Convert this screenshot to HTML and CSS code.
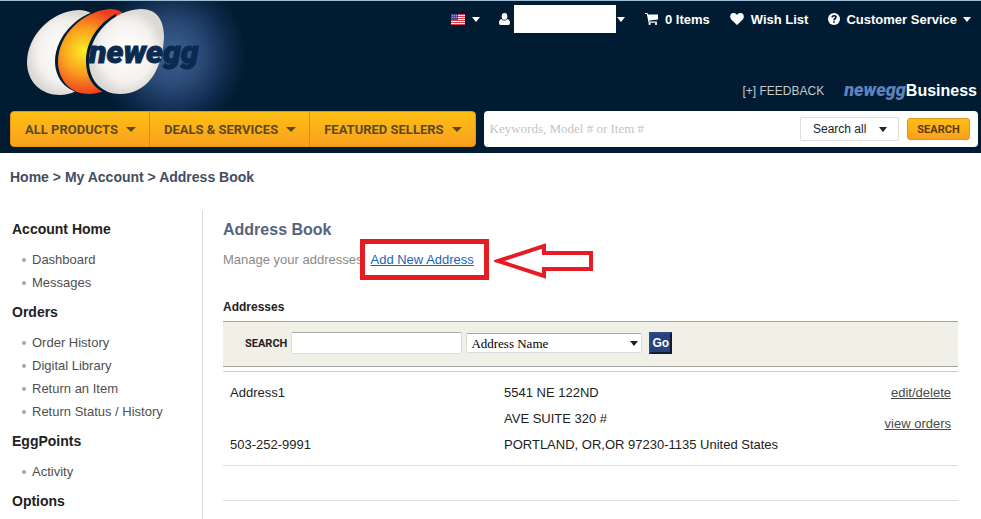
FILE: index.html
```html
<!DOCTYPE html>
<html lang="en">
<head>
  <meta charset="UTF-8" />
  <meta name="viewport" content="width=device-width, initial-scale=1" />
  <title>Address Book - Newegg.com</title>
  <link rel="stylesheet" href="styles.css">
</head>
<body>
  <header>
    <div class="masthead">
      <a class="logo" href="#" aria-label="newegg">
        <svg width="232" height="109" viewBox="0 1 232 109">
          <defs>
            <radialGradient id="shell">
              <stop offset="0" stop-color="#ffffff" />
              <stop offset="0.7" stop-color="#f4f2f0" />
              <stop offset="1" stop-color="#dcd8d3" />
            </radialGradient>
            <radialGradient id="yolk" gradientUnits="userSpaceOnUse" cx="84" cy="51" r="44">
              <stop offset="0" stop-color="#fbee22" />
              <stop offset="0.5" stop-color="#f9a11e" />
              <stop offset="1" stop-color="#ee3c20" />
            </radialGradient>
          </defs>
          <path d="M79 10C50 11 27 37 27 62C27 82 41 95 60 95C82 95 98 74 101 46C103 24 96 10 79 10Z" fill="url(#shell)" />
          <path d="M108 9C80 10 55 36 55 61C55 81 69 94 89 94C112 94 130 74 133 46C134 24 127 9 108 9Z" fill="#011c32" />
          <path d="M110 9C82 11 58 36 58 61C58 81 71 94 89 94C112 94 130 74 133 46C134 24 127 9 110 9Z" fill="url(#yolk)" />
          <path d="M122 11C100 20 86 40 86 61C86 77 93 87 103 92L116 88V14Z" fill="#011c32" />
          <path d="M141 9C112 10 89 36 89 61C89 81 102 94 120 94C146 94 162 72 164 38C164 20 157 9 141 9Z" fill="url(#shell)" />
          <text class="logo-text" x="89" y="63">newegg</text>
        </svg>
      </a>
      <div class="masthead-links">
        <nav class="top-links">
          <button class="country" type="button" aria-label="Country">
            <svg width="14" height="11" viewBox="0 0 14 11">
              <rect width="14" height="11" fill="#f6e6e8" />
              <path d="M0 .5h14M0 2.5h14M0 4.5h14M0 6.5h14M0 8.5h14M0 10.5h14" stroke="#d0404e" />
              <rect width="7" height="6" fill="#454a98" />
              <path d="M1 1.5h6M1 3.5h6" stroke="#9fa3cf" stroke-dasharray="1 1" />
            </svg>
            <span class="caret"></span>
          </button>
          <div class="account">
            <svg width="11" height="12" viewBox="0 0 11 12" fill="#fff">
              <ellipse cx="5.5" cy="3.4" rx="2.8" ry="3.4" />
              <path d="M2.600 6C.7 6.400 0 8 0 10q0 2 1.600 2h7.800Q11 12 11 10C11 8 10.300 6.400 8.400 6C6.800 8 4.200 8 2.600 6Z" />
            </svg>
            <span class="account-name"></span>
            <span class="caret"></span>
          </div>
          <a class="cart" href="#">
            <svg width="13" height="12" viewBox="0 0 13 12" fill="#fff">
              <path d="M0 0h2.500l.5 1.500h10v5l-8.600 1.100.2 1h7.400v1.100H3.600L1.800 1.100H0Z" />
              <circle cx="4.600" cy="10.900" r="1.100" />
              <circle cx="11" cy="10.900" r="1.100" />
            </svg>
            0 Items
          </a>
          <a class="wish" href="#">
            <svg width="14" height="12" viewBox="0 0 14 12" fill="#fff">
              <path d="M7 12L1.200 6.400C-.6 4.500-.2 0 3.700 0C5.300 0 6.300.9 7 1.900C7.700.9 8.700 0 10.300 0C14.200 0 14.600 4.500 12.800 6.400Z" />
            </svg>
            Wish List
          </a>
          <a class="service" href="#">
            <svg width="12" height="12" viewBox="0 0 12 12">
              <circle cx="6" cy="6" r="6" fill="#fff" />
              <path d="M4 4.300C4.300 2.200 8 2.200 8 4.300C8 5.700 6 5.700 6 7.200M6 8.200v1.600" fill="none" stroke="#011c32" stroke-width="1.700" />
            </svg>
            Customer Service
            <span class="caret"></span>
          </a>
        </nav>
        <div class="sub-links">
          <a class="feedback" href="#">[+] FEEDBACK</a>
          <a class="business" href="#"><em>newegg</em>Business</a>
        </div>
      </div>
    </div>
    <div class="nav-row">
      <nav class="main-nav">
        <button type="button">ALL PRODUCTS <span class="caret"></span></button>
        <button type="button">DEALS &amp; SERVICES <span class="caret"></span></button>
        <button type="button">FEATURED SELLERS <span class="caret"></span></button>
      </nav>
      <form class="site-search">
        <input type="text" placeholder="Keywords, Model # or Item #" aria-label="Search products">
        <div class="select-box scope">
          <select aria-label="Search in">
            <option>Search all</option>
          </select>
          <span class="caret"></span>
        </div>
        <button type="button">SEARCH</button>
      </form>
    </div>
  </header>

  <div class="breadcrumb">
    <a href="#">Home</a> &gt; <a href="#">My Account</a> &gt; <a href="#">Address Book</a>
  </div>

  <div class="main-container">
    <!-- LEFT: account menu -->
    <aside class="sidebar">
      <h2>Account Home</h2>
      <ul>
        <li><a href="#">Dashboard</a></li>
        <li><a href="#">Messages</a></li>
      </ul>
      <h2>Orders</h2>
      <ul>
        <li><a href="#">Order History</a></li>
        <li><a href="#">Digital Library</a></li>
        <li><a href="#">Return an Item</a></li>
        <li><a href="#">Return Status / History</a></li>
      </ul>
      <h2>EggPoints</h2>
      <ul>
        <li><a href="#">Activity</a></li>
      </ul>
      <h2>Options</h2>
    </aside>

    <!-- RIGHT: address book -->
    <main class="content">
      <h1>Address Book</h1>
      <p class="intro">
        Manage your addresses
        <span class="callout">
          <a href="#">Add New Address</a>
          <svg class="callout-arrow" width="100" height="38" viewBox="0 0 100 38">
            <path d="M4 19L50 4V11H97V27H50V34Z" fill="#fff" stroke="#e51c23" stroke-width="4" />
          </svg>
        </span>
      </p>
      <h3>Addresses</h3>
      <form class="address-search">
        <label for="addressSearch">SEARCH</label>
        <input type="text" id="addressSearch">
        <div class="select-box field">
          <select aria-label="Search field">
            <option>Address Name</option>
          </select>
          <span class="caret"></span>
        </div>
        <button type="button">Go</button>
      </form>
      <table>
        <tbody>
          <tr>
            <td class="name">
              <div>Address1</div>
              <div class="phone">503-252-9991</div>
            </td>
            <td class="street">
              <div>5541 NE 122ND</div>
              <div>AVE SUITE 320 #</div>
              <div>PORTLAND, OR,OR 97230-1135 United States</div>
            </td>
            <td class="actions">
              <a href="#">edit/delete</a>
              <a href="#">view orders</a>
            </td>
          </tr>
          <tr class="spacer">
            <td colspan="3"></td>
          </tr>
        </tbody>
      </table>
    </main>
  </div>
</body>
</html>
```

FILE: styles.css
```css
* {
  box-sizing: border-box;
}
body {
  margin: 0;
  font-family: "Liberation Sans", Arial, sans-serif;
  font-size: 13px;
  color: #222;
  background-color: #fff;
}
a {
  color: inherit;
  text-decoration: none;
}
button {
  cursor: pointer;
}
svg {
  display: block;
  flex-shrink: 0;
}
.caret {
  border: 4px solid transparent;
  border-top: 5px solid currentColor;
  border-bottom: 0;
}

/* header */
header {
  background: radial-gradient(74px 78px at 172px 54px, #3d6292, #2a4a77 40%, #0f2b4d 75%, transparent) #011c32;
  border-top: 1px solid #9dbdd2;
  padding-bottom: 6px;
}
.masthead {
  display: flex;
  justify-content: space-between;
  height: 110px;
}
.logo-text {
  font: italic 900 32px Roboto, Arial, sans-serif;
  fill: #0b2a50;
  stroke: #0b2a50;
  stroke-width: 1px;
}
.masthead-links {
  display: flex;
  flex-direction: column;
  justify-content: space-between;
  color: #fff;
  padding: 3px 4px 12px 0;
}
.top-links {
  display: flex;
  align-items: center;
  justify-content: flex-end;
  height: 30px;
  padding-right: 6px;
  font-weight: bold;
}
.top-links a,
.account,
.country {
  display: flex;
  align-items: center;
  gap: 7px;
}
.country {
  padding: 0;
  border: 0;
  background: none;
  color: #fff;
  margin-right: 19px;
}
.account {
  gap: 4px;
}
.account-name {
  width: 102px;
  height: 28px;
  background-color: #fff;
  margin-right: -3px;
}
.top-links .cart,
.top-links .wish,
.top-links .service {
  margin-left: 20px;
}
.top-links .service {
  gap: 6px;
}
.sub-links {
  display: flex;
  align-items: center;
  justify-content: flex-end;
  gap: 20px;
  line-height: 16px;
}
.feedback {
  font-size: 12px;
  color: #c3c8ce;
}
.business {
  font-size: 16px;
  font-weight: bold;
}
.business em {
  font: italic 900 18px/16px Roboto, Arial, sans-serif;
  color: #5f83bd;
}

/* navigation bar */
.nav-row {
  display: flex;
  gap: 8px;
  padding: 0 3px 0 10px;
}
.main-nav {
  display: flex;
  height: 36px;
  border: 1px solid #e8951a;
  border-radius: 4px;
  background: linear-gradient(#fdbf14, #f9a01e);
}
.main-nav button {
  display: flex;
  align-items: center;
  gap: 8px;
  padding: 0 13px 0 14px;
  border: 0;
  border-right: 1px solid #d98a1c;
  background: none;
  color: #5c4a1e;
  font: bold 13px Roboto, Arial, sans-serif;
  white-space: nowrap;
}
.main-nav button:last-child {
  border-right: 0;
}
.main-nav .caret {
  border-left-width: 5px;
  border-right-width: 5px;
}
.site-search {
  display: flex;
  align-items: center;
  flex: 1;
  gap: 8px;
  height: 36px;
  padding: 0 8px 0 6px;
  border-radius: 4px;
  background-color: #fff;
}
.site-search input {
  flex: 1;
  min-width: 0;
  padding: 0;
  border: 0;
  font: 13px "Liberation Serif", "Times New Roman", serif;
}
.site-search input::placeholder {
  color: #c4c4c4;
}
.select-box {
  position: relative;
}
.select-box select {
  appearance: none;
  width: 100%;
  height: 100%;
  border-radius: 2px;
  background-color: #fff;
}
.select-box .caret {
  position: absolute;
  right: 4px;
  top: 50%;
  margin-top: -2px;
  pointer-events: none;
}
.scope {
  width: 99px;
  height: 24px;
}
.scope select {
  padding: 0 12px;
  border: 1px solid #ddd;
  font: 12px "Liberation Sans", Arial, sans-serif;
  color: #222;
}
.scope .caret {
  right: 12px;
}
.site-search button {
  height: 22px;
  width: 63px;
  padding: 0;
  border: 1px solid #e0951f;
  border-radius: 3px;
  background: linear-gradient(#fdbf14, #f9a01e);
  color: #5c3a10;
  font: bold 11px Roboto, Arial, sans-serif;
}

.breadcrumb {
  padding: 12px 10px 21px;
  font-size: 14px;
  font-weight: bold;
  line-height: 24px;
  color: #434d63;
}

/* page body */
.main-container {
  display: flex;
}
.sidebar {
  flex: 0 0 203px;
  padding: 1px 0 0 12px;
  border-right: 1px solid #ddd;
  line-height: 23px;
}
.sidebar h2 {
  margin: 7px 0;
  font-size: 14px;
  line-height: 23px;
}
.sidebar ul {
  margin: 0;
  padding: 0;
  list-style: none;
  color: #4f4f4f;
}
.sidebar li {
  display: flex;
  align-items: center;
  gap: 6px;
  padding-left: 10px;
}
.sidebar li::before {
  content: "";
  width: 4px;
  height: 4px;
  border-radius: 50%;
  background-color: #a4a6aa;
}
.content {
  flex: 1;
  padding: 8px 23px 0 20px;
}
.content h1 {
  margin: 0;
  font-size: 16px;
  line-height: 24px;
  color: #56647b;
}
.intro {
  display: flex;
  align-items: center;
  height: 35px;
  margin: 0;
  color: #8a8a8a;
}
.callout {
  position: relative;
  margin-left: -2px;
  padding: 8px 10px 8px 5px;
  border: 5px solid #e51c23;
  background-color: #fff;
  line-height: 15px;
}
.callout a {
  color: #1f62c0;
  text-decoration: underline;
}
.callout-arrow {
  position: absolute;
  left: 100%;
  top: -2px;
  margin-left: 10px;
}
.content h3 {
  margin: 20px 0 4px;
  font-size: 12px;
  line-height: 20px;
}
.address-search {
  display: flex;
  align-items: center;
  gap: 4px;
  height: 46px;
  padding: 0 0 2px 22px;
  border-top: 1px solid #a5a5a2;
  border-bottom: 1px solid #a5a5a2;
  background-color: #f0f0e6;
}
.address-search label {
  font: bold 11px Roboto, Arial, sans-serif;
}
.address-search input {
  width: 171px;
  height: 22px;
  border: 1px solid #ddd;
  border-top-color: #aaa;
  border-radius: 2px;
}
.field {
  width: 176px;
  height: 20px;
}
.field select {
  padding: 0 4px;
  border: 1px solid #ddd;
  border-top-color: #aaa;
  font: 13px "Liberation Serif", "Times New Roman", serif;
  color: #000;
}
.address-search button {
  height: 22px;
  margin-left: 3px;
  padding: 0 1px;
  border: 2px outset #2c4a86;
  background-color: #24437f;
  color: #fff;
  font: bold 12px "Liberation Sans", Arial, sans-serif;
}
table {
  width: 100%;
  margin-top: 4px;
  border-collapse: collapse;
  border-top: 1px solid #ccc;
  line-height: 26px;
}
tr {
  border-bottom: 1px solid #ddd;
}
td {
  padding: 8px 7px 7px;
  vertical-align: top;
}
.name {
  width: 274px;
}
.phone {
  margin-top: 26px;
}
.actions {
  text-align: right;
  color: #4a4a4a;
}
.actions a {
  display: block;
  margin-bottom: 5px;
  text-decoration: underline;
}
.spacer td {
  height: 35px;
  padding: 0;
}
```
